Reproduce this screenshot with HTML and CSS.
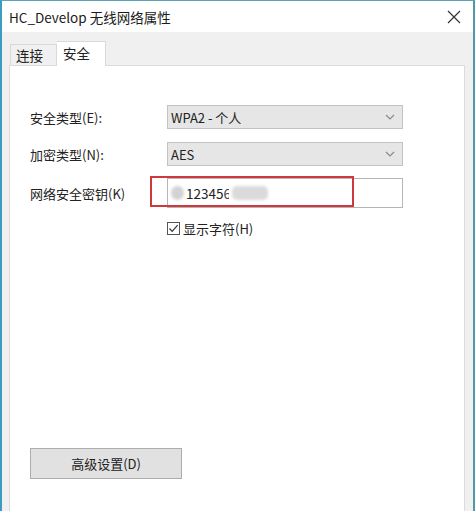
FILE: index.html
```html
<!DOCTYPE html>
<html lang="zh-CN">
<head>
  <meta charset="UTF-8" />
  <title>HC_Develop 无线网络属性</title>
  <link rel="stylesheet" href="styles.css">
</head>
<body>
  <div class="window">
    <div class="titlebar">
      <span class="title">HC_Develop 无线网络属性</span>
      <span class="close">
        <svg width="14" height="14" viewBox="0 0 14 14"><path d="M1 1L13 13M13 1L1 13" stroke="#333" stroke-width="1.2" fill="none"/></svg>
      </span>
    </div>

    <div class="body">
      <div class="tabs">
        <div class="tab">连接</div>
        <div class="tab active">安全</div>
      </div>

      <div class="panel">
        <div class="row first">
          <label>安全类型(E):</label>
          <div class="select">
            <span>WPA2 - 个人</span>
            <svg width="10" height="6" viewBox="0 0 10 6"><path d="M1 1L5 5L9 1" stroke="#888" stroke-width="1.1" fill="none"/></svg>
          </div>
        </div>

        <div class="row">
          <label>加密类型(N):</label>
          <div class="select">
            <span>AES</span>
            <svg width="10" height="6" viewBox="0 0 10 6"><path d="M1 1L5 5L9 1" stroke="#888" stroke-width="1.1" fill="none"/></svg>
          </div>
        </div>

        <div class="row key">
          <label>网络安全密钥(K)</label>
          <div class="key-box">
            <div class="input">
              <span class="blur dot"></span>
              <span class="value">12345</span><span class="six">6</span>
              <span class="blur smear"></span>
            </div>
            <div class="mark"></div>
          </div>
        </div>

        <div class="check">
          <span class="box">
            <svg width="11" height="11" viewBox="0 0 11 11"><path d="M1.5 5.5L4.2 8.4L9.6 2.2" stroke="#333" stroke-width="1.2" fill="none"/></svg>
          </span>
          <span>显示字符(H)</span>
        </div>

        <button class="advanced">高级设置(D)</button>
      </div>
    </div>
  </div>
</body>
</html>
```

FILE: styles.css
```css
html, body {
  margin: 0;
  height: 100%;
}

body {
  font-family: "Noto Sans CJK SC", "Noto Sans", sans-serif;
  font-size: 13px;
  color: #222;
  background: #fff;
  overflow: hidden;
}

.window {
  height: 511px;
  border-left: 2px solid #3b9cc1;
  border-right: 2px solid #4e9aa6;
  border-top: 1px solid #5aa4b5;
  display: flex;
  flex-direction: column;
  box-sizing: border-box;
}

.titlebar {
  height: 31px;
  display: flex;
  align-items: center;
  justify-content: space-between;
  padding: 0 12px 0 7px;
  background: #fff;
}

.title {
  font-size: 13.5px;
  color: #1a1a1a;
}

.close {
  display: flex;
}

.body {
  flex: 1;
  background: #f0f0f0;
  padding: 8px 8px 0 7px;
  display: flex;
  flex-direction: column;
}

.tabs {
  display: flex;
  align-items: flex-end;
  height: 25px;
  padding-left: 1px;
}

.tab {
  height: 20px;
  line-height: 20px;
  padding: 0 6px 0 5px;
  border: 1px solid #d9d9d9;
  border-bottom: none;
  background: #f0f0f0;
  font-size: 13.5px;
  width: 34px;
}

.tab.active {
  height: 24px;
  line-height: 22px;
  width: 36px;
  background: #fff;
  padding: 0 6px;
  position: relative;
  top: 1px;
  border-left: none;
}

.panel {
  flex: 1;
  background: #fff;
  border: 1px solid #dcdcdc;
  border-bottom: none;
  padding: 0 0 0 20px;
  display: flex;
  flex-direction: column;
}

.row {
  display: flex;
  align-items: center;
  margin-top: 13px;
}

.row.first {
  margin-top: 39px;
}

.row label {
  width: 137px;
  font-size: 13px;
}

.select {
  box-sizing: border-box;
  width: 236px;
  height: 24px;
  border: 1px solid #c3c3c3;
  background: #e6e6e6;
  display: flex;
  align-items: center;
  justify-content: space-between;
  padding: 0 7px 0 3px;
  font-size: 13px;
}

.row.key {
  margin-top: 12px;
}

.key-box {
  position: relative;
  width: 236px;
  height: 30px;
}

.input {
  box-sizing: border-box;
  width: 236px;
  height: 30px;
  border: 1px solid #b5b5b5;
  background: #fff;
  display: flex;
  align-items: center;
  padding-left: 3px;
  font-size: 13.5px;
}

.blur {
  display: inline-block;
  background: #d2d2d2;
  filter: blur(1.5px);
}

.dot {
  width: 13px;
  height: 14px;
  border-radius: 50%;
  margin-right: 2px;
}

.value {
  color: #222;
}

.six {
  color: #444;
  width: 6px;
  overflow: hidden;
  display: inline-block;
}

.smear {
  width: 36px;
  height: 14px;
  background: #dadada;
  margin-left: 3px;
  border-radius: 5px;
}

.mark {
  position: absolute;
  left: -17px;
  top: -2px;
  width: 200px;
  height: 27px;
  border: 2px solid #d0393c;
}

.check {
  display: flex;
  align-items: center;
  margin: 11px 0 0 137px;
  gap: 3px;
}

.box {
  width: 11px;
  height: 11px;
  border: 1px solid #555;
  display: flex;
  background: #fff;
}

.advanced {
  margin-top: 210px;
  width: 152px;
  height: 31px;
  background: #e1e1e1;
  border: 1px solid #adadad;
  font-family: inherit;
  font-size: 13px;
  color: #222;
  padding: 0;
}
```
